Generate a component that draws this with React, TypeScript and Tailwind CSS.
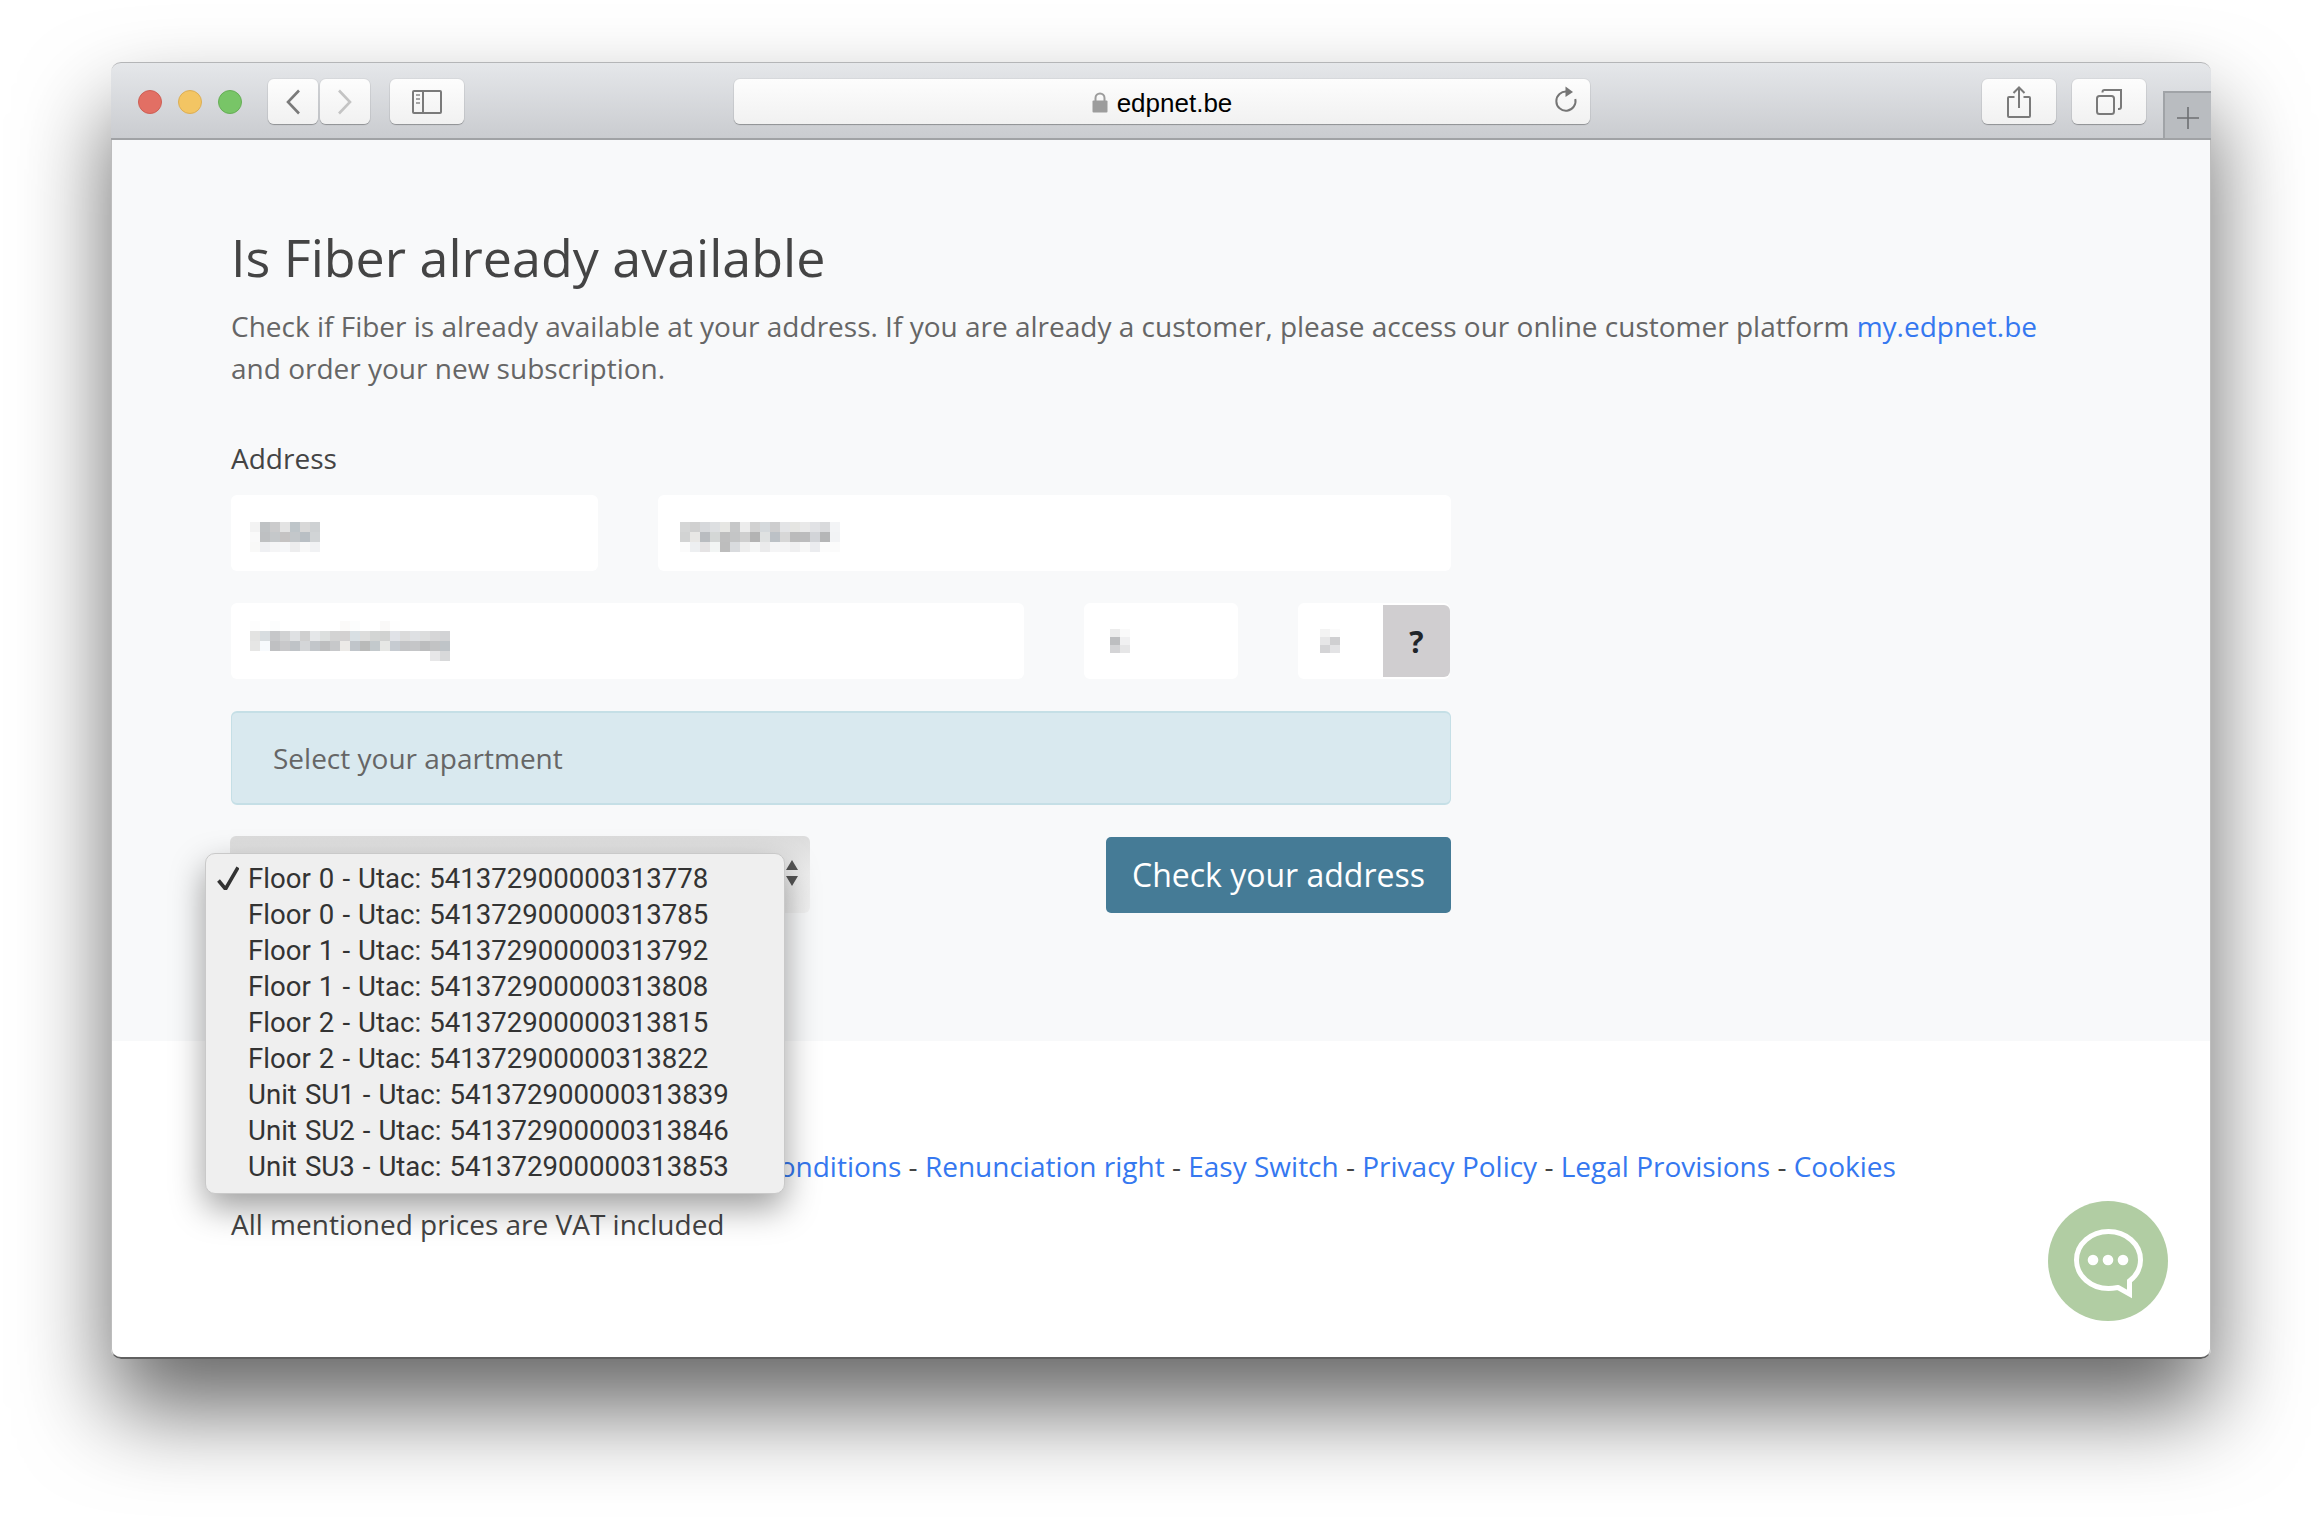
import React from "react";

const g1 = [
  ["#f3f3f3", "#bfc2c4", "#cbcbcc", "#e3e3e3", "#bec5c9", "#d8d8d8", "#ced1d3"],
  ["#fafafa", "#bec0c2", "#c5c8ca", "#c5c3c3", "#c3c7ca", "#b9bfc4", "#d1d4d6"],
  ["#f9f9f8", "#eff0f3", "#f5f5f6", "#f6f7f9", "#ededee", "#f8f8f8", "#f1f2f4"],
];
const g2 = [
  ["#d5d6d6", "#d0d0d0", "#d6d8db", "#dddfe1", "#e6e6e3", "#c6c7c8", "#ececec", "#d1d1d1", "#d5d9dc", "#cdcdce", "#e3e4e6", "#e5e5e2", "#e9e9e9", "#e1e2e5", "#d9dadc", "#f3f4f6"],
  ["#d2d3d3", "#e8e7e5", "#b9bcc0", "#d4d7d6", "#bebebe", "#c4c5c6", "#cfcfcf", "#b3b3b3", "#dfe1e1", "#bcc1c6", "#d7d7d7", "#bbbbbb", "#bcbcbd", "#d2d4d8", "#b5b6b7", "#f2f3f5"],
  ["#fbfbfb", "#edeff1", "#e5e3e4", "#f2f5f4", "#bdbdbd", "#d9dbde", "#eeeeee", "#f5f6f6", "#ebebec", "#f5f5f6", "#f4f4f5", "#efeff0", "#f7f7f7", "#ebecef", "#fcfcfc", "#fbfbfb"],
];
const g3 = [
  ["#fdfdfd", "#ffffff", "#fcfdfd", "#ffffff", "#ffffff", "#ffffff", "#ffffff", "#ffffff", "#ffffff", "#fbfaf9", "#fcfdfd", "#ffffff", "#ffffff", "#faf9f8", "#fefefe", "#ffffff", "#ffffff", "#ffffff", "#ffffff", "#ffffff"],
  ["#e3e3e2", "#d8dde0", "#c6c7c9", "#d1d2d3", "#dfe1e3", "#cfcfcf", "#e5e7e9", "#dcdfde", "#d3d3d3", "#d3d1d1", "#d8dfe3", "#dddddc", "#d3d5d4", "#d1d2d1", "#e0e2e7", "#dbdbdb", "#dee0e3", "#dcdddd", "#d6d6d7", "#d2d3d5"],
  ["#e6e6e5", "#f7fafd", "#bfc0c2", "#c8c8ca", "#bfc3c7", "#d4d6d8", "#c2c6ca", "#bdbebf", "#c7c8ca", "#eceae7", "#c0c5ca", "#b9bab9", "#c3c9cc", "#e6e7e5", "#c6cbd1", "#c3c4c6", "#c5c6c8", "#bcbdbe", "#c2c3c4", "#bfc4c8"],
  ["#ffffff", "#ffffff", "#ffffff", "#ffffff", "#ffffff", "#ffffff", "#ffffff", "#ffffff", "#ffffff", "#ffffff", "#ffffff", "#ffffff", "#ffffff", "#ffffff", "#ffffff", "#ffffff", "#ffffff", "#ffffff", "#e7e7e8", "#d8d9da"],
];
const g4 = [
  ["#ececec", "#fafafa"],
  ["#bdbec0", "#f0f0f1"],
  ["#d4d4d6", "#e6e6e7"],
];
const g5 = [
  ["#f3f3f3", "#fbfbfb"],
  ["#e6e6e7", "#cfcfd1"],
  ["#d4d4d6", "#e3e3e5"],
];

function Mosaic({ cells, cell = 10, h = 10 }: { cells: string[][]; cell?: number; h?: number }) {
  return (
    <svg width={cells[0].length * cell} height={cells.length * h} shapeRendering="crispEdges" className="block">
      {cells.map((row, y) =>
        row.map((c, x) => <rect key={x + "-" + y} x={x * cell} y={y * h} width={cell} height={h} fill={c} />)
      )}
    </svg>
  );
}

const toolBtn =
  "h-[45px] rounded-[6px] flex items-center justify-center bg-gradient-to-b from-[#fdfdfd] to-[#f1f1f1] shadow-[0_1px_1px_rgba(0,0,0,0.28),0_0_0_1px_rgba(0,0,0,0.04)]";
const link = "text-[#3578f0]";
const inputCls = "h-[76px] bg-white rounded-[6px] flex items-center";

const options = [
  "Floor 0 - Utac: 541372900000313778",
  "Floor 0 - Utac: 541372900000313785",
  "Floor 1 - Utac: 541372900000313792",
  "Floor 1 - Utac: 541372900000313808",
  "Floor 2 - Utac: 541372900000313815",
  "Floor 2 - Utac: 541372900000313822",
  "Unit SU1 - Utac: 541372900000313839",
  "Unit SU2 - Utac: 541372900000313846",
  "Unit SU3 - Utac: 541372900000313853",
];

export default function App() {
  return (
    <div className="h-[1518px] w-[2322px] overflow-hidden bg-white pt-[62px] pl-[111px] font-['Open_Sans',sans-serif]">
      <div className="relative w-[2100px] h-[1297px] rounded-[10px] shadow-[0_50px_90px_0_rgba(0,0,0,0.6)] bg-white flex flex-col">
        {/* toolbar */}
        <div className="relative h-[78px] shrink-0 rounded-t-[10px] bg-gradient-to-b from-[#e5e7ea] to-[#caccd0] border-t border-t-[#b4b5b7] border-b-2 border-b-[#a0a2a5] flex items-start pt-[16px] pl-[27px]">
          <div className="flex items-center gap-[16px] h-[45px]">
            <span className="w-[24px] h-[24px] rounded-full bg-[#e26f64] border border-[#cd5f55]" />
            <span className="w-[24px] h-[24px] rounded-full bg-[#f3c563] border border-[#dcae55]" />
            <span className="w-[24px] h-[24px] rounded-full bg-[#78c567] border border-[#66ae56]" />
          </div>
          <div className={toolBtn + " w-[50px] ml-[26px]"}>
            <svg width="16" height="26" viewBox="0 0 16 26" fill="none" stroke="#7a7a7a" strokeWidth="2.6">
              <path d="M14 1.5 3 13l11 11.5" />
            </svg>
          </div>
          <div className={toolBtn + " w-[50px] ml-[2px]"}>
            <svg width="16" height="26" viewBox="0 0 16 26" fill="none" stroke="#c4c4c4" strokeWidth="2.6">
              <path d="M2 1.5 13 13 2 24.5" />
            </svg>
          </div>
          <div className={toolBtn + " w-[74px] ml-[20px]"}>
            <svg width="30" height="24" viewBox="0 0 30 24" fill="none">
              <rect x="1" y="1" width="28" height="22" rx="1" stroke="#7a7a7a" strokeWidth="2" />
              <path d="M11 1v22" stroke="#7a7a7a" strokeWidth="2" />
              <path d="M4 5h4M4 9h4M4 13h4" stroke="#a5a5a5" strokeWidth="2" />
            </svg>
          </div>
          <div className={toolBtn + " w-[856px] ml-[270px] relative"}>
            <svg width="16" height="21" viewBox="0 0 16 21" className="mr-[9px] mt-[1px]">
              <path d="M3.5 9V6a4.5 4.5 0 0 1 9 0v3" fill="none" stroke="#9c9c9c" strokeWidth="2" />
              <rect x="0.5" y="8.5" width="15" height="12" rx="1" fill="#9c9c9c" />
            </svg>
            <span className="mt-[2px] font-['Liberation_Sans',sans-serif] text-[26px] leading-[30px] text-black">edpnet.be</span>
            <svg width="24" height="28" viewBox="0 0 24 28" fill="none" className="absolute right-[12px] top-[7px]">
              <path d="M13 5.6A9.6 9.6 0 1 0 21.3 13" stroke="#757575" strokeWidth="2" />
              <path d="M11.5 0.5 19 6l-7.5 5z" fill="#757575" />
            </svg>
          </div>
          <div className={toolBtn + " w-[74px] ml-[392px]"}>
            <svg width="24" height="32" viewBox="0 0 24 32" fill="none" stroke="#7a7a7a" strokeWidth="2">
              <path d="M7.5 11H2a1 1 0 0 0-1 1v18a1 1 0 0 0 1 1h20a1 1 0 0 0 1-1V12a1 1 0 0 0-1-1h-5.5" />
              <path d="M12 22V1.5M6.5 7 12 1.5 17.5 7" />
            </svg>
          </div>
          <div className={toolBtn + " w-[74px] ml-[16px]"}>
            <svg width="26" height="26" viewBox="0 0 26 26" fill="none" stroke="#7a7a7a" strokeWidth="2">
              <rect x="1" y="7" width="17" height="18" rx="2.5" />
              <path d="M6.5 3.5V3a2 2 0 0 1 2-2H25v17a2 2 0 0 1-2 2h-1" />
            </svg>
          </div>
          <div className="absolute right-0 bottom-0 w-[48px] h-[47px] bg-[#b9bcc0] border-t-2 border-l-2 border-[#a0a3a7] flex items-center justify-center pt-[4px]">
            <svg width="22" height="22" viewBox="0 0 22 22" stroke="#6d6f72" strokeWidth="1.6">
              <path d="M11 0v22M0 11h22" />
            </svg>
          </div>
        </div>

        {/* main */}
        <div className="h-[901px] shrink-0 bg-[#f8f9fa] pt-[87px] pl-[119px] border-x border-x-[#bdbdbd]">
          <h1 className="text-[52px] leading-[60px] text-[#444444] font-normal">Is Fiber already available</h1>
          <p className="mt-[18px] w-[1840px] text-[28px] leading-[42px] text-[#666666]">
            Check if Fiber is already available at your address. If you are already a customer, please access our online customer platform{" "}
            <span className={link}>my.edpnet.be</span> and order your new subscription.
          </p>
          <div className="mt-[48px] text-[28px] leading-[42px] text-[#444444]">Address</div>
          <div className="mt-[16px] w-[1220px] flex flex-col gap-[32px]">
            <div className="flex gap-[60px]">
              <div className={inputCls + " w-[367px] pl-[19px]"}>
                <div className="mt-[8px]">
                  <Mosaic cells={g1} />
                </div>
              </div>
              <div className={inputCls + " w-[793px] pl-[22px]"}>
                <div className="mt-[8px]">
                  <Mosaic cells={g2} />
                </div>
              </div>
            </div>
            <div className="flex gap-[60px]">
              <div className={inputCls + " w-[793px] pl-[19px]"}>
                <Mosaic cells={g3} />
              </div>
              <div className={inputCls + " w-[154px] pl-[26px]"}>
                <Mosaic cells={g4} h={8} />
              </div>
              <div className={inputCls + " w-[152px] pl-[22px] relative"}>
                <Mosaic cells={g5} h={8} />
                <div className="absolute right-0 top-[2px] w-[67px] h-[72px] bg-[#d0ced0] rounded-r-[6px] flex items-center justify-center text-[30px] font-bold text-[#212529]">
                  ?
                </div>
              </div>
            </div>
            <div className="h-[94px] rounded-[6px] bg-[#d9e9ef] border border-[#c5dfe6] border-t-2 border-b-2 flex items-center pl-[41px] text-[28px] text-[#666666]">
              Select your apartment
            </div>
            <div className="flex justify-between items-start">
              <div className="w-[580px] h-[77px] -mt-px -ml-px rounded-[6px] bg-gradient-to-b from-[#dcdcdc] via-[#eeeeee] to-[#f1f1f1] relative">
                <svg width="14" height="28" viewBox="0 0 14 28" fill="#555" className="absolute right-[11px] top-[24px]">
                  <path d="M7 0l6 10H1zM7 26l6-10H1z" />
                </svg>
              </div>
              <div className="w-[345px] h-[76px] rounded-[5px] bg-[#457b96] text-white text-[32px] flex items-center justify-center">
                Check your address
              </div>
            </div>
          </div>
        </div>

        {/* footer */}
        <div className="flex-1 rounded-b-[10px] bg-white pt-[104px] pl-[119px] border-x border-x-[#bdbdbd] border-b-2 border-b-[#606060]">
          <div className="text-[28px] leading-[42px] text-[#444444] whitespace-nowrap">
            <span className={link}>Copyright ©edpnet - General Terms and Conditions</span> - <span className={link}>Renunciation right</span> -{" "}
            <span className={link}>Easy Switch</span> - <span className={link}>Privacy Policy</span> - <span className={link}>Legal Provisions</span> -{" "}
            <span className={link}>Cookies</span>
          </div>
          <div className="mt-[16px] text-[28px] leading-[42px] text-[#444444]">All mentioned prices are VAT included</div>
        </div>

        {/* native select popup */}
        <div className="absolute left-[94px] top-[791px] w-[580px] h-[341px] rounded-[10px] bg-[#efefef] border border-[#c9c9c9] shadow-[0_14px_34px_rgba(0,0,0,0.38)] pt-[7px] font-['Roboto',sans-serif] text-[27.6px] [word-spacing:1.2px] text-[#333333]">
          {options.map((o, i) => (
            <div key={o} className="relative h-[36px] leading-[36px] pl-[42px] whitespace-nowrap">
              {i === 0 && (
                <svg width="22" height="24" viewBox="0 0 22 24" className="absolute left-[11px] top-[5px]">
                  <path d="M1.5 14.5 8.5 23 21 1.5" fill="none" stroke="#333333" strokeWidth="3.6" />
                </svg>
              )}
              {o}
            </div>
          ))}
        </div>

        {/* chat bubble */}
        <div className="absolute left-[1937px] top-[1139px] w-[120px] h-[120px] rounded-full bg-[#b1cda3]">
          <svg width="120" height="120" viewBox="0 0 120 120" fill="none">
            <path
              d="M70 86.5 81.5 93V80C88 75 92.5 67.5 92.5 59 92.5 43 78 30.5 60.5 30.5 43 30.5 28.5 43 28.5 59 28.5 75 43 87.5 60.5 87.5 64 87.5 67 87 70 86.5Z"
              stroke="#fff"
              strokeWidth="5"
            />
            <circle cx="45" cy="59" r="5.3" fill="#fff" />
            <circle cx="60" cy="59" r="5.3" fill="#fff" />
            <circle cx="75" cy="59" r="5.3" fill="#fff" />
          </svg>
        </div>
      </div>
    </div>
  );
}
